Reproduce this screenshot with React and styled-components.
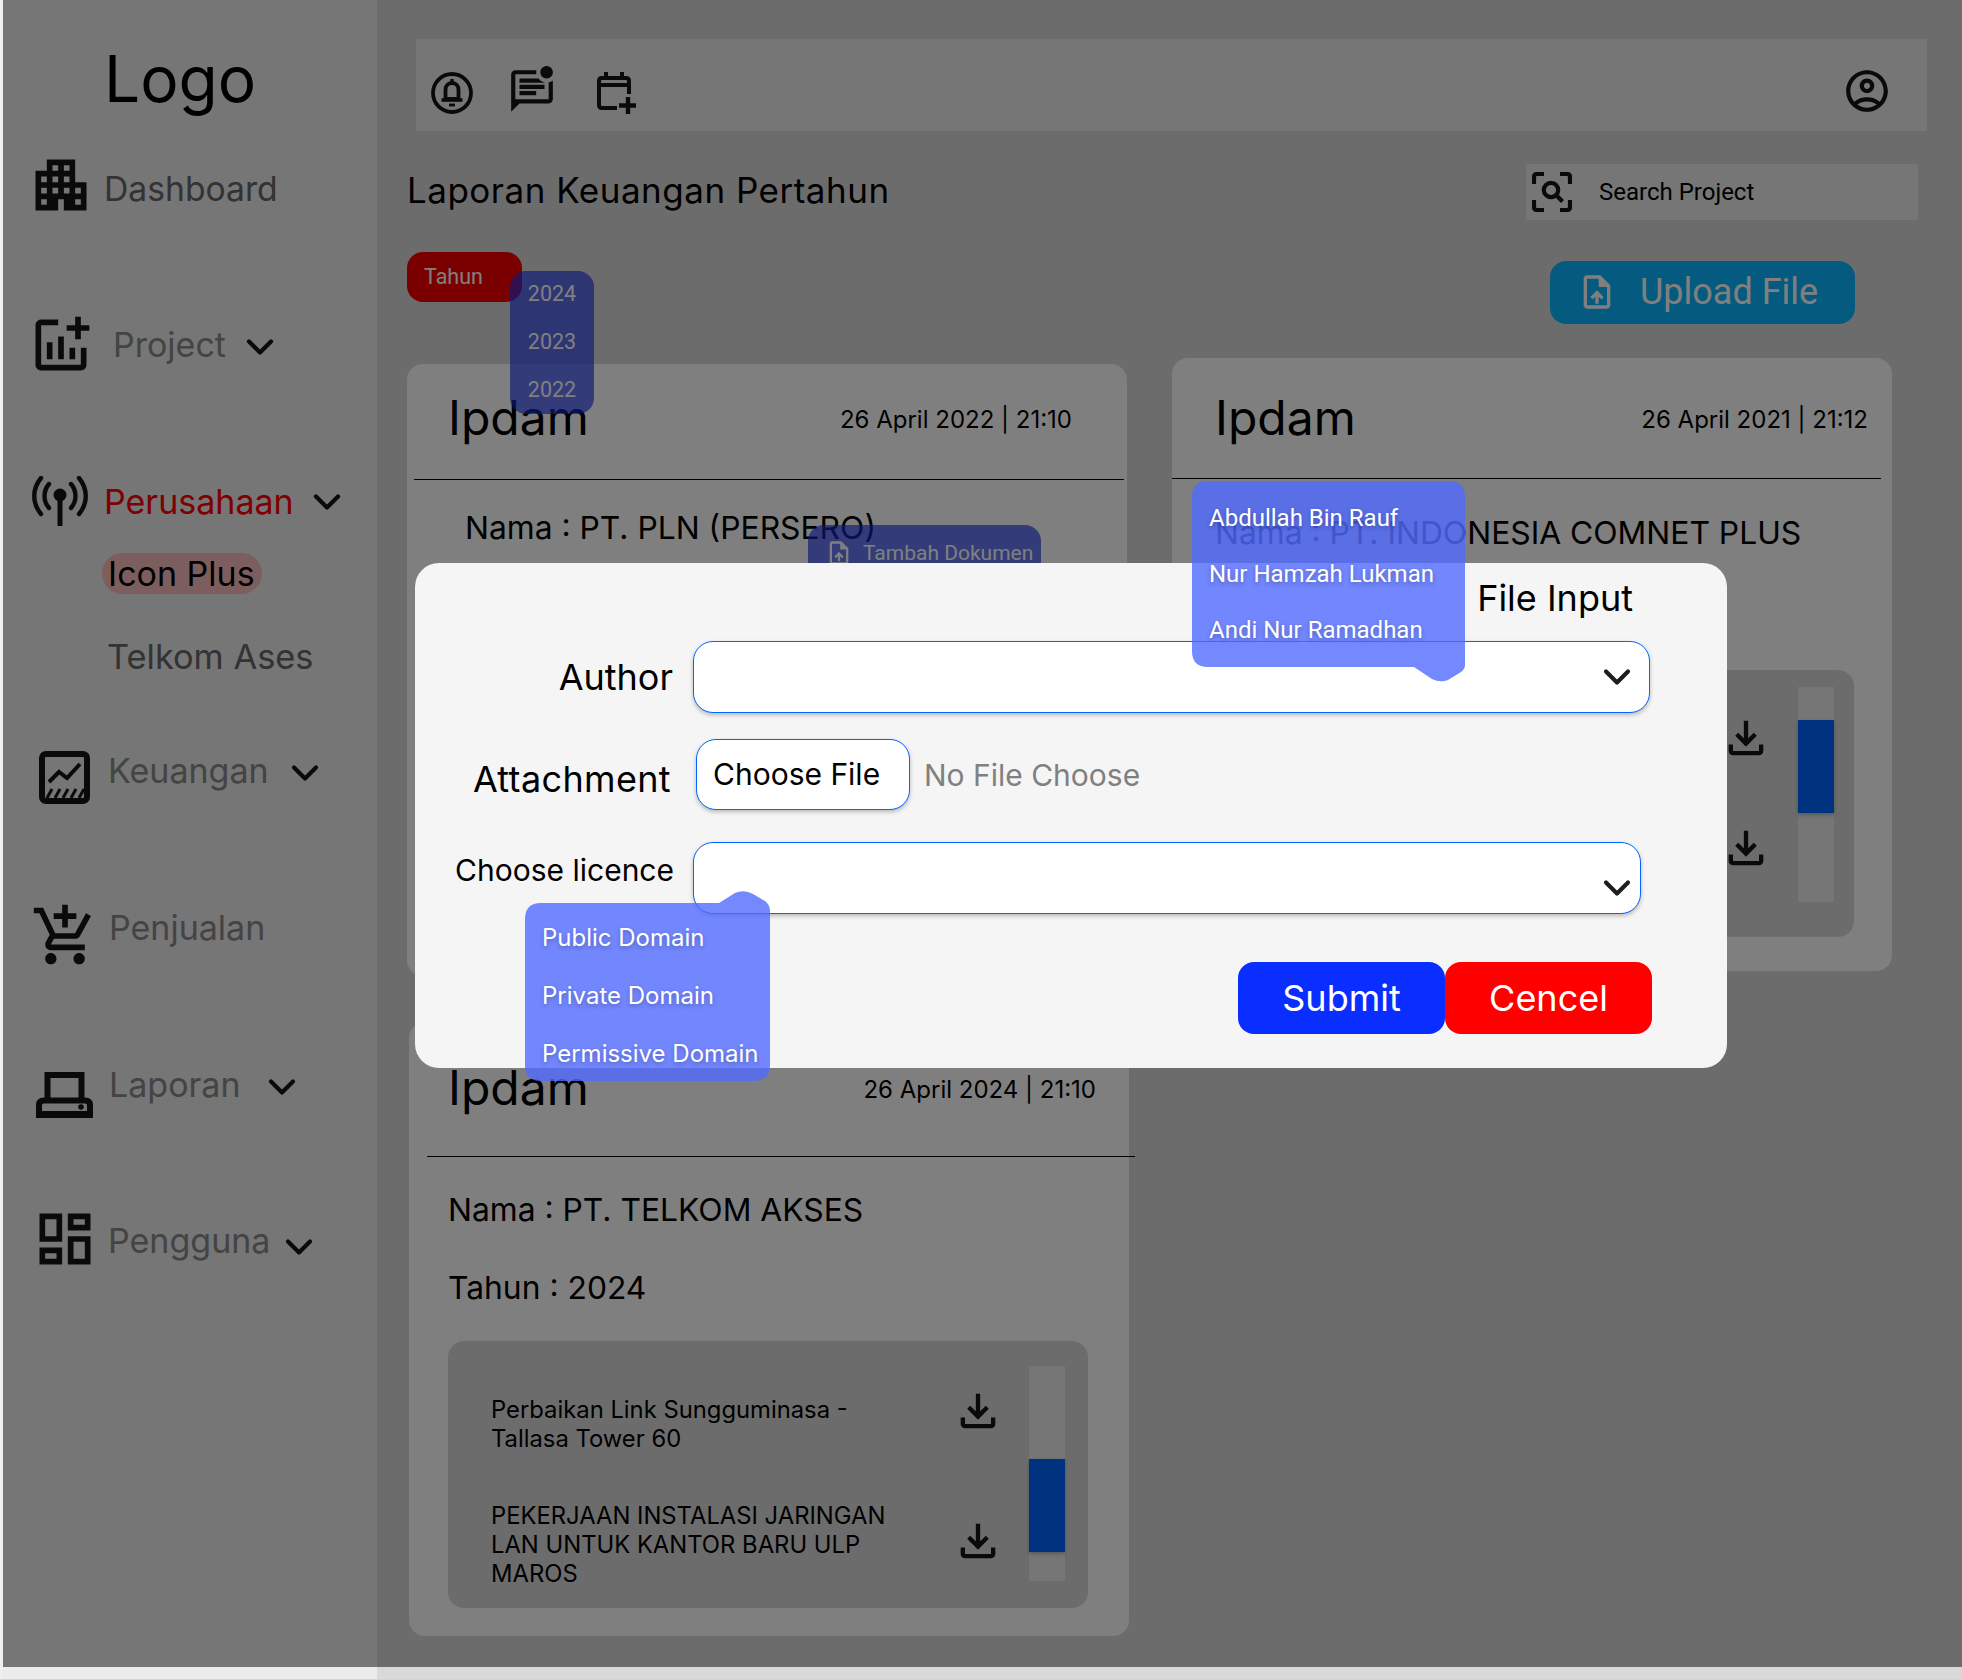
import React from "react";
import styled, { createGlobalStyle } from "styled-components";
import {
  MdApartment,
  MdAddchart,
  MdOutlineAddShoppingCart,
  MdOutlineDashboard,
  MdOutlineMarkUnreadChatAlt,
  MdOutlineAccountCircle,
  MdOutlineUploadFile,
  MdOutlineFileDownload,
} from "react-icons/md";
import { ChevronDown } from "lucide-react";

const GlobalStyle = createGlobalStyle`
  html, body {
    margin: 0;
    padding: 0;
    height: 1679px;
    overflow: hidden;
    background: #f0f0f0;
    font-family: "Inter", "Liberation Sans", sans-serif;
  }
  * { box-sizing: border-box; }
`;

const Shell = styled.div`
  display: flex;
  height: 1679px;
  margin-left: 3px;
`;

const Sidebar = styled.aside`
  flex: 0 0 374px;
  background: #ececec;
`;

const Logo = styled.div`
  height: 158px;
  padding: 39px 0 0 101px;
  font-size: 64px;
  line-height: 80px;
  color: #000;
`;

const NavRow = styled.div`
  display: flex;
  align-items: center;
  height: 60px;
  margin-top: ${(p) => p.$top}px;
  padding-left: ${(p) => p.$pad}px;
`;

const IconBox = styled.span`
  flex: 0 0 auto;
  display: flex;
  align-items: center;
  justify-content: center;
  width: ${(p) => p.$w}px;
  height: ${(p) => p.$h}px;
  margin-top: ${(p) => p.$shift || 0}px;
  margin-left: ${(p) => p.$left || 0}px;
  color: ${(p) => p.$tone || "#141414"};
  svg { flex: 0 0 auto; display: block; }
`;

const NavLabel = styled.span`
  margin-left: ${(p) => p.$gap}px;
  padding-top: ${(p) => p.$drop || 0}px;
  font-size: ${(p) => p.$size || 34}px;
  line-height: 44px;
  white-space: nowrap;
  color: ${(p) => p.$color};
`;

const Caret = styled.span`
  display: flex;
  width: 24px;
  height: 15px;
  align-items: center;
  justify-content: center;
  margin-left: ${(p) => p.$gap}px;
  margin-top: ${(p) => p.$shift || 0}px;
  color: #141414;
  svg { flex: 0 0 auto; }
`;

const SubActive = styled.div`
  width: 160px;
  height: 41px;
  margin: 21px 0 0 99px;
  padding-left: 6px;
  border-radius: 21px;
  background: #fbbcbc;
  font-size: 34px;
  line-height: 41px;
  color: #000;
`;

const SubItem = styled.div`
  height: 41px;
  margin: 42px 0 0 104px;
  font-size: 34.4px;
  line-height: 41px;
  color: #666;
`;

const Main = styled.main`
  flex: 1;
  min-width: 0;
  padding-top: 39px;
  background: #d9d9d9;
`;

const TopBar = styled.header`
  display: flex;
  align-items: center;
  height: 92px;
  margin: 0 35px 0 39px;
  padding: 11px 39px 0 15px;
  background: #ececec;
`;

const TopIcons = styled.div`
  display: flex;
  flex: 1;
  gap: 38px;
  align-items: flex-end;
`;

const TitleRow = styled.div`
  display: flex;
  align-items: center;
  justify-content: space-between;
  height: 56px;
  margin: 33px 44px 0 30px;
`;

const PageTitle = styled.h1`
  margin: 0 0 4px;
  font-size: 35px;
  font-weight: 400;
  line-height: 44px;
  letter-spacing: 0.5px;
  color: #000;
`;

const SearchBox = styled.div`
  display: flex;
  align-items: center;
  width: 392px;
  height: 56px;
  padding-left: 6px;
  background: #ececec;
  font: 400 24px "Roboto", sans-serif;
  color: #000;
`;

const SearchText = styled.span`
  margin-left: 27px;
`;

const ActionRow = styled.div`
  display: flex;
  align-items: flex-end;
  justify-content: space-between;
  height: 72px;
  margin: 32px 107px 0 30px;
`;

const YearWrap = styled.div`
  position: relative;
  align-self: flex-start;
`;

const YearButton = styled.button`
  display: block;
  width: 115px;
  height: 50px;
  padding: 0 0 1px 17px;
  border: 0;
  border-radius: 16px;
  background: #f50000;
  font: 400 21.5px "Roboto", sans-serif;
  text-align: left;
  color: #fff;
`;

const YearMenu = styled.ul`
  position: absolute;
  z-index: 2;
  left: 103px;
  top: 19px;
  display: flex;
  flex-direction: column;
  gap: 20px;
  width: 84px;
  height: 143px;
  margin: 0;
  padding: 9px 0 0;
  border-radius: 16px;
  background: rgba(22, 46, 237, 0.65);
  list-style: none;
  font: 400 21.5px/28px "Roboto", sans-serif;
  text-align: center;
  color: #fff;
`;

const UploadButton = styled.button`
  display: flex;
  align-items: center;
  width: 305px;
  height: 63px;
  padding: 0 0 2px 33px;
  border: 0;
  border-radius: 16px;
  background: #0ab7ff;
  font: 400 36px "Roboto", sans-serif;
  color: #fff;
`;

const UploadText = styled.span`
  margin-left: 30px;
`;

const CardGrid = styled.div`
  display: grid;
  grid-template-columns: 720px 720px;
  column-gap: 45px;
  row-gap: 46px;
  align-items: start;
  margin: 34px 0 0 30px;
`;

const Card = styled.section`
  position: relative;
  width: 720px;
  height: ${(p) => p.$h}px;
  margin-top: ${(p) => p.$top || 0}px;
  margin-left: ${(p) => p.$left || 0}px;
  border-radius: 16px;
  background: #fff;
`;

const CardHead = styled.div`
  box-sizing: content-box;
  display: flex;
  align-items: center;
  justify-content: space-between;
  height: 60px;
  padding: ${(p) => p.$pad};
`;

const CardName = styled.h2`
  margin: 0;
  font-size: 48px;
  font-weight: 400;
  color: #000;
`;

const CardDate = styled.span`
  margin-top: ${(p) => p.$drop}px;
  font-size: 24px;
  color: #000;
`;

const Rule = styled.hr`
  margin: ${(p) => p.$margin};
  border: 0;
  border-top: 1px solid #000;
`;

const Info = styled.p`
  margin: ${(p) => p.$margin};
  font-size: 31.8px;
  line-height: 40px;
  white-space: nowrap;
  color: #000;
`;

const AddDoc = styled.button`
  position: absolute;
  left: 401px;
  top: 161px;
  display: flex;
  align-items: flex-start;
  width: 233px;
  height: 80px;
  padding: 16px 0 0 22px;
  border: 0;
  border-radius: 16px;
  background: rgba(22, 46, 237, 0.65);
  font: 400 21px "Roboto", sans-serif;
  white-space: nowrap;
  color: #fff;
`;

const AddDocText = styled.span`
  margin-left: 15px;
`;

const DocPanel = styled.div`
  position: absolute;
  left: ${(p) => p.$x}px;
  top: ${(p) => p.$y}px;
  display: flex;
  align-items: flex-start;
  width: 640px;
  height: 267px;
  padding: ${(p) => p.$padTop}px 0 0 43px;
  border-radius: 16px;
  background: #d9d9d9;
`;

const DocList = styled.div`
  flex: 0 0 ${(p) => p.$w}px;
  display: flex;
  flex-direction: column;
  gap: ${(p) => p.$gap}px;
  padding-top: ${(p) => p.$top}px;
`;

const DocItem = styled.div`
  display: flex;
  align-items: flex-start;
`;

const DocName = styled.div`
  flex: 0 0 425px;
  padding-top: 1px;
  font-size: 23.8px;
  line-height: 29px;
  color: #000;
`;

const DocAction = styled.div`
  margin: ${(p) => p.$top}px 0 0 ${(p) => p.$gap}px;
`;

const Track = styled.div`
  flex: 0 0 36px;
  height: 215px;
  padding-top: ${(p) => p.$offset}px;
  background: #ececec;
`;

const Thumb = styled.div`
  height: 93px;
  background: #0066ff;
  box-shadow: 0 2px 4px rgba(0, 0, 0, 0.25);
`;

const Backdrop = styled.div`
  position: absolute;
  left: 3px;
  right: 0;
  top: 0;
  height: 1667px;
  z-index: 5;
  background: rgba(0, 0, 0, 0.5);
`;

const Modal = styled.div`
  position: absolute;
  left: 412px;
  top: 563px;
  width: 1312px;
  height: 505px;
  padding-top: 13px;
  border-radius: 24px;
  background: #f5f5f5;
`;

const ModalTitle = styled.div`
  height: 44px;
  padding-right: 94px;
  font-size: 36px;
  line-height: 44px;
  text-align: right;
  color: #000;
`;

const FormRow = styled.div`
  display: flex;
  align-items: center;
  margin-top: ${(p) => p.$top}px;
`;

const FieldLabel = styled.label`
  flex: 0 0 ${(p) => p.$w}px;
  padding-top: ${(p) => p.$drop || 0}px;
  padding-bottom: ${(p) => p.$raise || 0}px;
  font-size: ${(p) => p.$size}px;
  line-height: 44px;
  letter-spacing: ${(p) => p.$track || 0}px;
  text-align: right;
  white-space: nowrap;
  color: #000;
`;

const Select = styled.div`
  display: flex;
  justify-content: flex-end;
  align-items: center;
  width: ${(p) => p.$w}px;
  height: 72px;
  margin-left: ${(p) => p.$gap}px;
  padding: ${(p) => p.$chevTop || 0}px ${(p) => p.$chevRight}px 0 0;
  border: 1px solid #0066ff;
  border-radius: 20px;
  background: #fff;
  box-shadow: 0 2px 4px rgba(0, 0, 0, 0.25);
  svg { flex: 0 0 auto; }
`;

const CaretDark = styled(Caret)`
  color: #1e1e1e;
  margin-left: 0;
`;

const FileButton = styled.button`
  width: 214px;
  height: 71px;
  margin-left: ${(p) => p.$gap}px;
  padding: 0 0 2px 16px;
  border: 1px solid #0066ff;
  border-radius: 20px;
  background: #fff;
  box-shadow: 0 2px 4px rgba(0, 0, 0, 0.25);
  font: 400 30px "Inter", sans-serif;
  text-align: left;
  color: #000;
`;

const FileStatus = styled.span`
  margin-left: 14px;
  font-size: 30px;
  color: #808080;
`;

const Actions = styled.div`
  display: flex;
  justify-content: flex-end;
  margin-top: 48px;
  padding-right: 75px;
`;

const ActionButton = styled.button`
  width: 207px;
  height: 72px;
  border: 0;
  border-radius: 16px;
  background: ${(p) => p.$bg};
  font: 400 36px "Inter", sans-serif;
  color: #fff;
`;

const Popup = styled.ul`
  position: absolute;
  left: ${(p) => p.$x}px;
  top: ${(p) => p.$y}px;
  display: flex;
  flex-direction: column;
  gap: ${(p) => p.$gap}px;
  width: ${(p) => p.$w}px;
  height: ${(p) => p.$h}px;
  margin: 0;
  padding: ${(p) => p.$pad}px 0 0 17px;
  background: rgba(81, 106, 255, 0.8);
  clip-path: path("${(p) => p.$shape}");
  list-style: none;
  font-family: ${(p) => p.$font};
  font-size: 24px;
  line-height: 28px;
  white-space: nowrap;
  color: #fff;
  text-shadow: 0 2px 4px rgba(0, 0, 0, 0.25);
`;

// icons the packages don't have in this form
const AntennaIcon = () => (
  <svg width="56" height="52" viewBox="0 0 56 52" fill="none" stroke="currentColor" strokeWidth="4.4" strokeLinecap="round">
    <circle cx="28" cy="19" r="6.5" fill="currentColor" stroke="none" />
    <path d="M28 20V50" strokeWidth="5" strokeLinecap="butt" />
    <path d="M17 8C11 15 11 25 17 32" />
    <path d="M39 8C45 15 45 25 39 32" />
    <path d="M9 2C0 13 0 27 9 38" />
    <path d="M47 2C56 13 56 27 47 38" />
  </svg>
);

const ChartBoardIcon = () => (
  <svg width="51" height="53" viewBox="0 0 51 53" fill="none" stroke="currentColor">
    <rect x="3" y="3" width="45" height="47" rx="4" strokeWidth="6" />
    <path d="M10 31L20 21L28 27L41 13" strokeWidth="4" />
    <path d="M8 47L13 38M16 47L21 38M24 47L29 38M32 47L37 38M40 47L45 38" strokeWidth="3" />
  </svg>
);

const PrinterIcon = () => (
  <svg width="57" height="46" viewBox="0 0 57 46" fill="none" stroke="currentColor">
    <path d="M11.5 27V3H45.5V27" strokeWidth="6" />
    <path d="M3 44V33Q3 28.5 8 28.5H49Q54 28.5 54 33V44" strokeWidth="6" />
    <path d="M0 42.5H57" strokeWidth="7" />
    <circle cx="45" cy="35" r="2.8" fill="currentColor" stroke="none" />
  </svg>
);

const BellCircleIcon = () => (
  <svg width="42" height="42" viewBox="0 0 42 42" fill="none" stroke="currentColor">
    <circle cx="21" cy="21" r="19" strokeWidth="3.8" />
    <path d="M21 11C16.8 11 14.5 14 14.5 18V27H27.5V18C27.5 14 25.2 11 21 11Z" strokeWidth="3.8" />
    <path d="M10.5 28H31.5" strokeWidth="3.6" />
    <path d="M21 7V10" strokeWidth="3.4" />
    <path d="M18 33H24" strokeWidth="2.8" />
  </svg>
);

const CalendarPlusIcon = () => (
  <svg width="40" height="42" viewBox="0 0 40 42" fill="none" stroke="currentColor" strokeWidth="4">
    <path d="M20 36H5Q2 36 2 33V9Q2 6 5 6H29Q32 6 32 9V22" />
    <path d="M9 0V8M25 0V8M2 13H32" />
    <path d="M31 25V42M22 33.5H39" strokeWidth="4.4" />
  </svg>
);

const ScanSearchIcon = () => (
  <svg width="40" height="40" viewBox="0 0 40 40" fill="none" stroke="currentColor" strokeWidth="4.2">
    <path d="M2 12V5Q2 2 5 2H12M28 2H35Q38 2 38 5V12M38 28V35Q38 38 35 38H28M12 38H5Q2 38 2 35V28" />
    <circle cx="19" cy="18" r="7.2" />
    <path d="M24 23L30.5 29.5" />
  </svg>
);

const Arrow = ({ size = 44 }) => <ChevronDown size={size} strokeWidth={2.3} />;

const authorShape =
  "M16 0H257Q273 0 273 16V184Q273 188 269 191L256 199Q248 202 240 198L222 186H16Q0 186 0 170V16Q0 0 16 0Z";
const licenceShape =
  "M16 12H194L210 2Q219 -2 228 3L240 10Q245 14 245 20V174Q245 190 229 190H16Q0 190 0 174V28Q0 12 16 12Z";

const docs = [
  "Perbaikan Link Sungguminasa - Tallasa Tower 60",
  "PEKERJAAN INSTALASI JARINGAN LAN UNTUK KANTOR BARU ULP MAROS",
];

const Documents = ({ x, y, padTop, listTop, listWidth, actionGap, gap, iconTop, thumb }) => (
  <DocPanel $x={x} $y={y} $padTop={padTop}>
    <DocList $w={listWidth} $top={listTop} $gap={gap}>
      {docs.map((name, i) => (
        <DocItem key={name}>
          <DocName>{name}</DocName>
          <DocAction $top={iconTop[i]} $gap={actionGap}>
            <IconBox $w={35} $h={34}>
              <MdOutlineFileDownload size={52} />
            </IconBox>
          </DocAction>
        </DocItem>
      ))}
    </DocList>
    <Track $offset={thumb}>
      <Thumb />
    </Track>
  </DocPanel>
);

const App = () => {
  return (
    <>
      <GlobalStyle />
      <Shell>
        <Sidebar>
          <Logo>Logo</Logo>
          <NavRow $top={0} $pad={32}>
            <IconBox $w={51} $h={53} $shift={-7}>
              <MdApartment size={68} />
            </IconBox>
            <NavLabel $gap={18} $size={33.7} $drop={1} $color="#666">Dashboard</NavLabel>
          </NavRow>
          <NavRow $top={97} $pad={32}>
            <IconBox $w={51} $h={53} $shift={-1}>
              <MdAddchart size={68} />
            </IconBox>
            <NavLabel $gap={27} $color="#888">Project</NavLabel>
            <Caret $gap={22} $shift={3}><Arrow /></Caret>
          </NavRow>
          <NavRow $top={97} $pad={29}>
            <IconBox $w={56} $h={52}>
              <AntennaIcon />
            </IconBox>
            <NavLabel $gap={16} $color="#f00">Perusahaan</NavLabel>
            <Caret $gap={21}><Arrow /></Caret>
          </NavRow>
          <SubActive>Icon Plus</SubActive>
          <SubItem>Telkom Ases</SubItem>
          <NavRow $top={63} $pad={36}>
            <IconBox $w={51} $h={53} $shift={15}>
              <ChartBoardIcon />
            </IconBox>
            <NavLabel $gap={18} $drop={2} $color="#888">Keuangan</NavLabel>
            <Caret $gap={24} $shift={5}><Arrow /></Caret>
          </NavRow>
          <NavRow $top={97} $pad={34}>
            <IconBox $w={56} $h={62} $shift={17}>
              <MdOutlineAddShoppingCart size={68} />
            </IconBox>
            <NavLabel $gap={16} $drop={2} $color="#888">Penjualan</NavLabel>
          </NavRow>
          <NavRow $top={97} $pad={33}>
            <IconBox $w={57} $h={46} $shift={22}>
              <PrinterIcon />
            </IconBox>
            <NavLabel $gap={16} $drop={2} $color="#888">Laporan</NavLabel>
            <Caret $gap={29} $shift={6}><Arrow /></Caret>
          </NavRow>
          <NavRow $top={96} $pad={36}>
            <IconBox $w={51} $h={53} $shift={-3}>
              <MdOutlineDashboard size={68} />
            </IconBox>
            <NavLabel $gap={18} $drop={2} $color="#888">Pengguna</NavLabel>
            <Caret $gap={17} $shift={14}><Arrow /></Caret>
          </NavRow>
        </Sidebar>

        <Main>
          <TopBar>
            <TopIcons>
              <IconBox $w={42} $h={42}><BellCircleIcon /></IconBox>
              <IconBox $w={42} $h={46}><MdOutlineMarkUnreadChatAlt size={50} /></IconBox>
              <IconBox $w={40} $h={42} $left={6}><CalendarPlusIcon /></IconBox>
            </TopIcons>
            <IconBox $w={42} $h={42}><MdOutlineAccountCircle size={50} /></IconBox>
          </TopBar>

          <TitleRow>
            <PageTitle>Laporan Keuangan Pertahun</PageTitle>
            <SearchBox>
              <IconBox $w={40} $h={40}><ScanSearchIcon /></IconBox>
              <SearchText>Search Project</SearchText>
            </SearchBox>
          </TitleRow>

          <ActionRow>
            <YearWrap>
              <YearButton>Tahun</YearButton>
              <YearMenu>
                <li>2024</li>
                <li>2023</li>
                <li>2022</li>
              </YearMenu>
            </YearWrap>
            <UploadButton>
              <IconBox $w={27} $h={33} $tone="#fff">
                <MdOutlineUploadFile size={40} />
              </IconBox>
              <UploadText>Upload File</UploadText>
            </UploadButton>
          </ActionRow>

          <CardGrid>
            <Card $h={612} $top={6}>
              <CardHead $pad="23px 55px 0 41px">
                <CardName>Ipdam</CardName>
                <CardDate $drop={5}>26 April 2022 | 21:10</CardDate>
              </CardHead>
              <Rule $margin="32px 3px 0 7px" />
              <Info $margin="28px 0 0 58px">Nama : PT. PLN (PERSERO)</Info>
              <AddDoc>
                <IconBox $w={18} $h={24} $tone="#fff">
                  <MdOutlineUploadFile size={28} />
                </IconBox>
                <AddDocText>Tambah Dokumen</AddDocText>
              </AddDoc>
              <Documents x={42} y={312} padTop={25} listTop={28} listWidth={538} actionGap={44} gap={47} iconTop={[0, 24]} thumb={93} />
            </Card>

            <Card $h={613}>
              <CardHead $pad="29px 24px 0 43px">
                <CardName>Ipdam</CardName>
                <CardDate $drop={5}>26 April 2021 | 21:12</CardDate>
              </CardHead>
              <Rule $margin="31px 11px 0 0" />
              <Info $margin="34px 0 0 43px">Nama : PT. INDONESIA COMNET PLUS</Info>
              <Documents x={42} y={312} padTop={17} listTop={34} listWidth={541} actionGap={46} gap={51} iconTop={[0, 0]} thumb={33} />
            </Card>

            <Card $h={614} $left={2}>
              <CardHead $pad="35px 33px 0 39px">
                <CardName>Ipdam</CardName>
                <CardDate $drop={4}>26 April 2024 | 21:10</CardDate>
              </CardHead>
              <Rule $margin="39px -6px 0 18px" />
              <Info $margin="33px 0 0 39px">Nama : PT. TELKOM AKSES</Info>
              <Info $margin="38px 0 0 39px">Tahun : 2024</Info>
              <Documents x={39} y={319} padTop={25} listTop={28} listWidth={538} actionGap={44} gap={47} iconTop={[0, 24]} thumb={93} />
            </Card>
          </CardGrid>
        </Main>
      </Shell>

      <Backdrop>
        <Modal>
          <ModalTitle>File Input</ModalTitle>
          <FormRow $top={21}>
            <FieldLabel $w={258} $size={36}>Author</FieldLabel>
            <Select $w={957} $gap={20} $chevRight={20}>
              <CaretDark><Arrow /></CaretDark>
            </Select>
          </FormRow>
          <FormRow $top={26}>
            <FieldLabel $w={256} $size={36} $drop={8} $track={0.35}>Attachment</FieldLabel>
            <FileButton $gap={25}>Choose File</FileButton>
            <FileStatus>No File Choose</FileStatus>
          </FormRow>
          <FormRow $top={32}>
            <FieldLabel $w={259} $size={30} $raise={16}>Choose licence</FieldLabel>
            <Select $w={948} $gap={19} $chevRight={11} $chevTop={20}>
              <CaretDark><Arrow /></CaretDark>
            </Select>
          </FormRow>
          <Actions>
            <ActionButton $bg="#0a2eff">Submit</ActionButton>
            <ActionButton $bg="#ff0000">Cencel</ActionButton>
          </Actions>
          <Popup $x={777} $y={-82} $w={273} $h={202} $pad={23} $gap={28} $font={'"Roboto", sans-serif'} $shape={authorShape}>
            <li>Abdullah Bin Rauf</li>
            <li>Nur Hamzah Lukman</li>
            <li>Andi Nur Ramadhan</li>
          </Popup>
          <Popup $x={110} $y={328} $w={245} $h={190} $pad={33} $gap={30} $font={'"Inter", sans-serif'} $shape={licenceShape}>
            <li>Public Domain</li>
            <li>Private Domain</li>
            <li>Permissive Domain</li>
          </Popup>
        </Modal>
      </Backdrop>
    </>
  );
};

export default App;
